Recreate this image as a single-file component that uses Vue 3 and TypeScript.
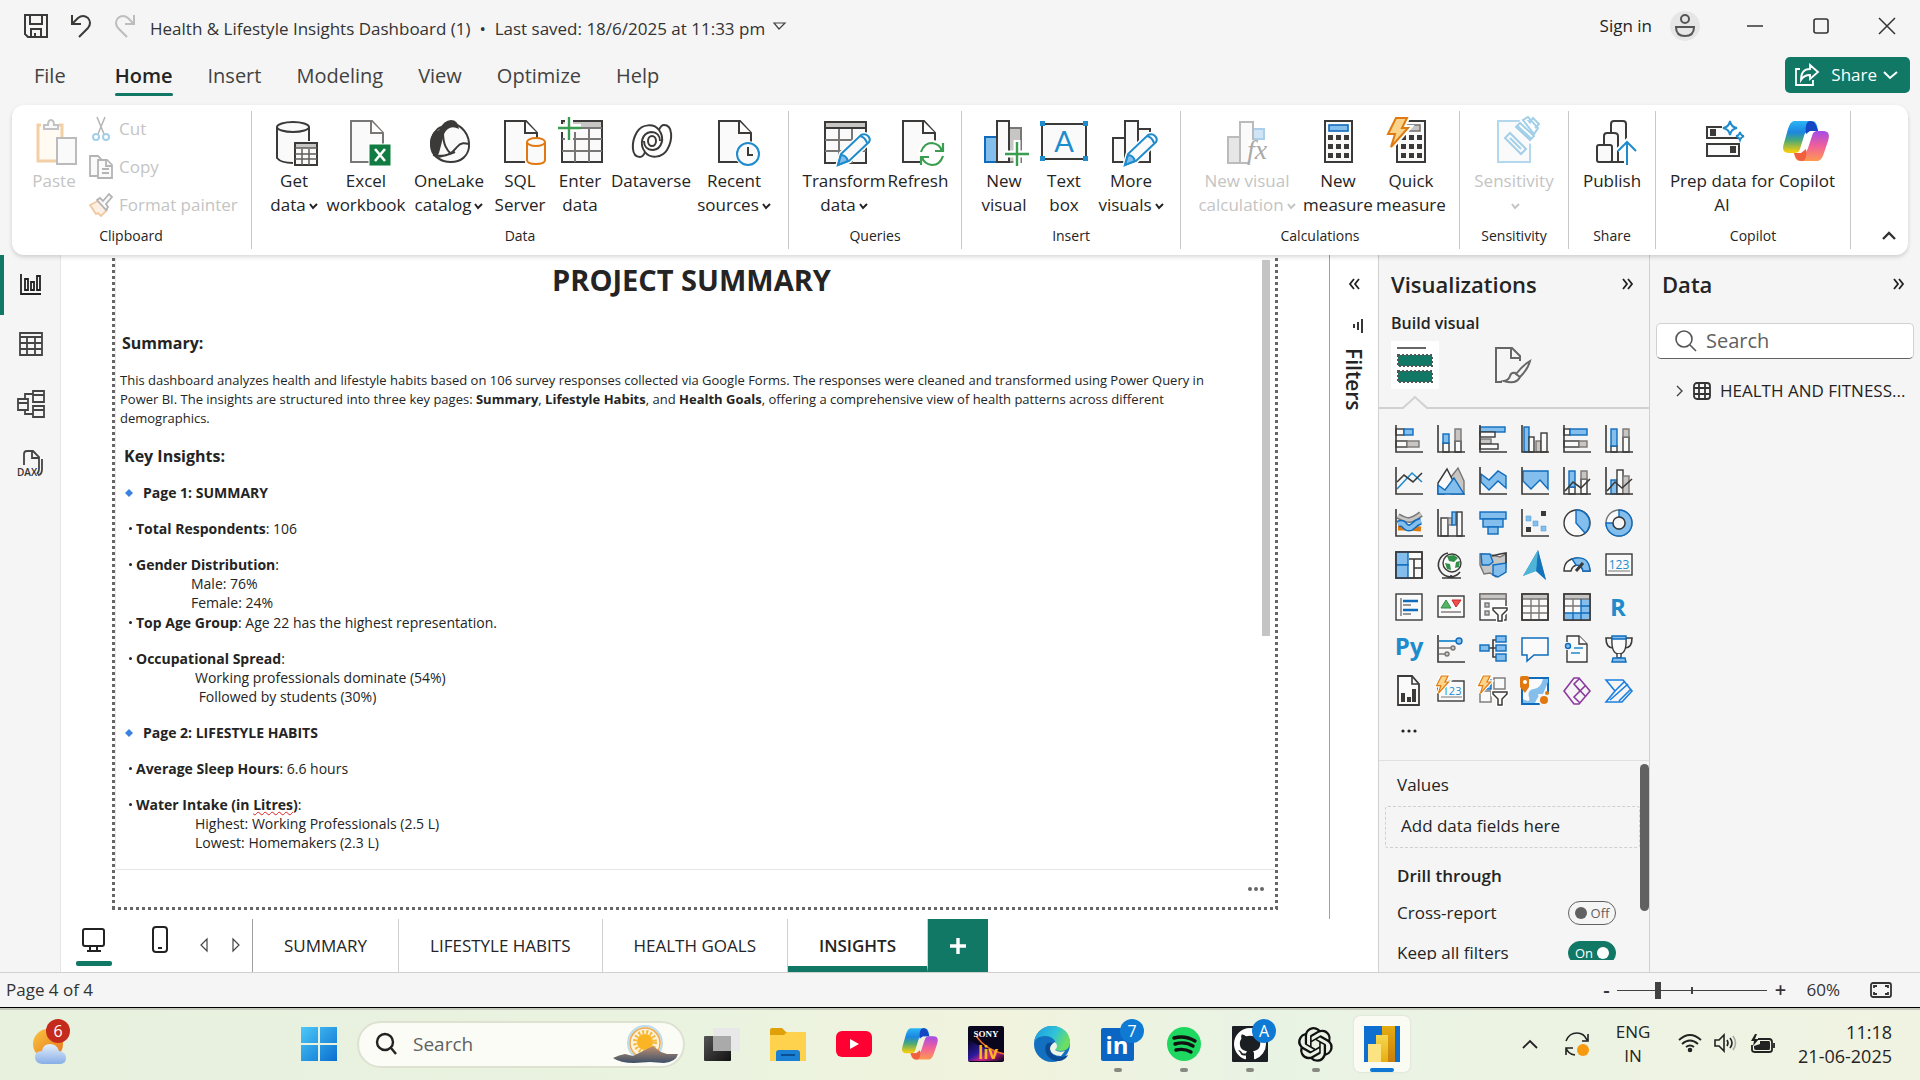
<script setup lang="ts">
import { ref } from 'vue'

interface Tool {
  icon: string
  lines: string[]
  size: string
  menu?: boolean
  off?: boolean
}
interface Group {
  name: string
  tools: Tool[]
}

const ink = 'stroke="#3b3a39" stroke-width="2"'
const page = (c: string) =>
  `<path d="M9 3h21l11 12v29H9z" fill="#fafafa" stroke="${c}" stroke-width="2"/><path d="M29 3v12h12" fill="#fff" stroke="${c}" stroke-width="2"/>`
const pencil =
  '<path d="M18 47l3-11L41 17q4-2 7 1t1 6L29 43z" fill="#fff" stroke="#fff" stroke-width="5"/><path d="M18 47l3-11L41 17q4-2 7 1t1 6L29 43z" fill="#fafafa" stroke="#1e8bcd" stroke-width="2"/><path d="M18 47l3-10q5 0 7 6z" fill="#83beec" stroke="#1e8bcd" stroke-width="2"/><path d="M40 18q5 1 7 7" fill="none" stroke="#1e8bcd" stroke-width="2"/>'
const keys = (x: number) =>
  [17, 26, 35]
    .map((y) => [0, 8, 16].map((d) => `<rect x="${x + d}" y="${y}" width="5" height="5" fill="#3b3a39"/>`).join(''))
    .join('')
const bolt = (s: number) =>
  `<path transform="scale(${s})" d="M9 0h11l-5 10h6L4 29l4-13H1z" fill="#fbd38a" stroke="#fff" stroke-width="6"/><path transform="scale(${s})" d="M9 0h11l-5 10h6L4 29l4-13H1z" fill="#fbd38a" stroke="#e07a10" stroke-width="2"/>`
const copilot =
  '<defs><linearGradient id="cpA" x1="0" y1="0" x2="0" y2="1"><stop offset="0" stop-color="#2bb5f5"/><stop offset=".35" stop-color="#1c86e0"/><stop offset=".6" stop-color="#48a878"/><stop offset=".95" stop-color="#f0cc10"/></linearGradient><linearGradient id="cpB" x1="0" y1="0" x2="0" y2="1"><stop offset="0" stop-color="#a44be8"/><stop offset=".5" stop-color="#f0609a"/><stop offset="1" stop-color="#ff9a50"/></linearGradient></defs><path d="M12 3h16c5 0 6 3 7 10h-8c-4 0-5 2-6 5l-4 13c-1 3-3 4-6 4H6c-6 0-7-4-5-10l4-14c2-6 4-8 7-8z" fill="url(#cpA)"/><path d="M27 3c5 0 6 3 8 10h-8l-4 3c-1-6 0-13 4-13z" fill="#1546c4"/><path d="M34 43H18c-5 0-6-3-7-8h8c4 0 5-2 6-5l4-12c1-4 3-5 6-5h5c6 0 7 4 5 10l-4 12c-2 6-4 8-7 8z" fill="url(#cpB)"/><path d="M19 43c-5 0-6-3-8-8h7l5-4c1 6 0 12-4 12z" fill="#f0603c"/>'

const swirl = 'M18 34q-2 5-5 5C4 39 4 24 10 14 15 6 27 5 32 12c6 8 3 19-6 20-6 0-9-4-9-9'

const art: Record<string, string> = {
  getData: `<path d="M8 9h31v15H24v20H8z" fill="#fafafa"/><path d="M7 9v31q4 5 16 5M39 9v14" fill="none" ${ink}/><ellipse cx="23" cy="9" rx="16" ry="5" fill="#fafafa" ${ink}/><rect x="25" y="25" width="22" height="22" fill="#fafafa" ${ink}/><path d="M26 26h20v4H26z" fill="#c8c6c4"/><path d="M25 30h22M25 36h22M25 41h22M32 31v16M39 31v16" stroke="#605e5c" stroke-width="1.5"/>`,
  excel: `${page('#797775')}<rect x="27" y="26" width="22" height="22" fill="#107c41" stroke="#fff"/><path d="M33 31l10 12M43 31L33 43" stroke="#fff" stroke-width="2.6"/>`,
  onelake: `<path d="M25 5c12 1 20 12 19 24-1 9-8 15-18 15S6 38 6 27C6 17 11 11 16 9" fill="#fafafa" ${ink}/><path d="M14 12Q19 2 26 2t8 9Q24 6 19 16l-5 19q-2 3-3 5Q5 33 5 24q1-10 9-12z" fill="#3b3a39"/><path d="M18 14c0 13 4 18 8 22M12 39c8-1 14-2 20-10 4-5 8-4 12-3M8 37c9 2 15 0 22-3" fill="none" ${ink}/>`,
  sql: `${page('#3b3a39')}<path d="M31 23v19q0 4 9 4t9-4V23z" fill="#fafafa" stroke="#fff" stroke-width="5"/><path d="M31 24v18q0 4 9 4t9-4V24" fill="#fafafa" stroke="#e07a10" stroke-width="2"/><ellipse cx="40" cy="24" rx="9" ry="4" fill="#fafafa" stroke="#e07a10" stroke-width="2"/>`,
  enter: `<rect x="6" y="3" width="40" height="41" fill="#fafafa" ${ink}/><path d="M7 4h38v5H7z" fill="#c8c6c4"/><path d="M6 10h40M6 21h40M6 33h40M19 10v34M33 10v34" stroke="#797775" stroke-width="2"/><path d="M13-1v23M2 10h23" stroke="#fff" stroke-width="8"/><path d="M13-1v23M2 10h23" stroke="#3a9d50" stroke-width="2.4"/>`,
  dataverse: `<path d="${swirl}" fill="none" ${ink}/><path transform="rotate(180 25 23)" d="${swirl}" fill="none" ${ink}/><ellipse cx="25" cy="23" rx="4" ry="5" fill="none" ${ink}/>`,
  recent: `${page('#3b3a39')}<circle cx="38" cy="36" r="13" fill="#fff"/><circle cx="38" cy="36" r="11" fill="#fafafa" stroke="#1e8bcd" stroke-width="2"/><path d="M38 29v8h5" fill="none" ${ink}/>`,
  transform: `<rect x="5" y="4" width="41" height="41" fill="#fafafa" ${ink}/><path d="M6 5h39v5H6z" fill="#c8c6c4"/><path d="M5 10h41" ${ink}/><path d="M5 22h41M5 33h41M19 11v34M32 11v34" stroke="#797775" stroke-width="2"/>${pencil}`,
  refresh: `${page('#3b3a39')}<circle cx="38" cy="36" r="14" fill="#fff"/><path d="M27 34q3-9 11-9 8 1 10 8M49 25v8h-8M49 38q-3 9-11 9-8-1-10-8M27 47v-8h8" fill="none" stroke="#3a9d50" stroke-width="2.2"/>`,
  visual: `<rect x="5" y="19" width="12" height="25" fill="#83beec" stroke="#0f6cbd" stroke-width="2"/><rect x="29" y="10" width="12" height="34" fill="#c8c6c4" stroke="#797775" stroke-width="2"/><rect x="17" y="3" width="12" height="41" fill="#fafafa" ${ink}/><path d="M37 22v26M24 36h25" stroke="#fff" stroke-width="7"/><path d="M37 24v24M25 36h24" stroke="#3a9d50" stroke-width="2.4"/>`,
  textbox: `<rect x="2" y="6" width="44" height="35" fill="#fafafa" ${ink}/><path d="M0 3h5v5H0zM43 3h5v5h-5zM0 38h5v5H0zM43 38h5v5h-5z" fill="#1e8bcd"/><text x="24" y="34" text-anchor="middle" font-family="Lato, sans-serif" font-size="29" fill="#1e8bcd">A</text>`,
  more: `<rect x="6" y="20" width="12" height="24" fill="#fafafa" ${ink}/><rect x="31" y="11" width="12" height="33" fill="#fafafa" ${ink}/><rect x="18" y="3" width="13" height="41" fill="#fafafa" ${ink}/>${pencil}`,
  calc: `<rect x="5" y="19" width="12" height="26" fill="#e6e6e6" stroke="#bbb" stroke-width="2"/><rect x="30" y="11" width="11" height="10" fill="#cfe4f7" stroke="#abcfe8" stroke-width="2"/><rect x="17" y="4" width="13" height="41" fill="#fafafa" stroke="#bbb" stroke-width="2"/><path d="M25 22h24v26H25z" fill="#fff"/><text x="24" y="41" font-family="Liberation Serif, serif" font-style="italic" font-size="28" fill="#aaa">fx</text>`,
  measure: `<rect x="11" y="3" width="27" height="41" fill="#fafafa" ${ink}/><rect x="15" y="7" width="19" height="6" fill="#83beec" stroke="#0f6cbd" stroke-width="1.6"/>${keys(14)}`,
  quick: `<rect x="10" y="3" width="28" height="41" fill="#fafafa" ${ink}/><rect x="16" y="7" width="17" height="6" fill="#c8c6c4" stroke="#797775" stroke-width="1.6"/>${keys(14)}${bolt(1)}`,
  sensitivity: `<rect x="8" y="3" width="32" height="41" fill="#fafafa" stroke="#b3d7ec" stroke-width="2"/><path d="M33-1l20 18-13 9-16-16z" fill="#fff"/><path d="M15 20l5-5 16 16-5 5zM20 20l11 11M26 9l4-4 14 13-4 4zM33 2l5-3 10 11-4 6zM39 5l4-5 6 6-4 4" fill="none" stroke="#a3cfe8" stroke-width="2"/><path d="M26 9l14 13 2-2L28 7z" fill="#a3cfe8"/>`,
  publish: `<path d="M23 15V6q0-3 3-3h9q3 0 3 3v38H26" fill="#fafafa" ${ink}/><path d="M16 27V18q0-3 3-3h7q4 0 4 3v26H16" fill="#fafafa" ${ink}/><rect x="9" y="27" width="15" height="17" rx="2" fill="#fafafa" ${ink}/><path d="M39 23v25M30 33l9-9 9 9" fill="none" stroke="#fff" stroke-width="6"/><path d="M39 24v23M30 33l9-9 9 9" fill="none" stroke="#1e8bcd" stroke-width="2"/>`,
  prep: `<path d="M24 9H9v11h32v-3" fill="#fafafa" ${ink}/><rect x="9" y="26" width="32" height="12" fill="#fafafa" ${ink}/><path d="M12 11h6v7h-6zM32 28h6v7h-6z" fill="#3b3a39"/><path d="M32 3q1 6 7 7-6 1-7 7-1-6-7-7 6-1 7-7zM42 14q1 4 4 4-3 1-4 4-1-3-4-4 3 0 4-4z" fill="#fff" stroke="#1e8bcd" stroke-width="2"/>`,
  copilot,
}

const groups: Group[] = [
  {
    name: 'Data',
    tools: [
      { icon: 'getData', lines: ['Get', 'data'], size: 's60', menu: true },
      { icon: 'excel', lines: ['Excel', 'workbook'], size: 's84' },
      { icon: 'onelake', lines: ['OneLake', 'catalog'], size: 's82', menu: true },
      { icon: 'sql', lines: ['SQL', 'Server'], size: 's60' },
      { icon: 'enter', lines: ['Enter', 'data'], size: 's60' },
      { icon: 'dataverse', lines: ['Dataverse'], size: 's82' },
      { icon: 'recent', lines: ['Recent', 'sources'], size: 's84', menu: true },
    ],
  },
  {
    name: 'Queries',
    tools: [
      { icon: 'transform', lines: ['Transform', 'data'], size: 's86', menu: true },
      { icon: 'refresh', lines: ['Refresh'], size: 's62' },
    ],
  },
  {
    name: 'Insert',
    tools: [
      { icon: 'visual', lines: ['New', 'visual'], size: 's60' },
      { icon: 'textbox', lines: ['Text', 'box'], size: 's60' },
      { icon: 'more', lines: ['More', 'visuals'], size: 's74', menu: true },
    ],
  },
  {
    name: 'Calculations',
    tools: [
      { icon: 'calc', lines: ['New visual', 'calculation'], size: 's108', menu: true, off: true },
      { icon: 'measure', lines: ['New', 'measure'], size: 's74' },
      { icon: 'quick', lines: ['Quick', 'measure'], size: 's72' },
    ],
  },
  { name: 'Sensitivity', tools: [{ icon: 'sensitivity', lines: ['Sensitivity', ''], size: 's84', menu: true, off: true }] },
  { name: 'Share', tools: [{ icon: 'publish', lines: ['Publish'], size: 's62' }] },
  {
    name: 'Copilot',
    tools: [
      { icon: 'prep', lines: ['Prep data for', 'AI'], size: 's108' },
      { icon: 'copilot', lines: ['Copilot'], size: 's62' },
    ],
  },
]

const D = 'fill="none" stroke="#3b3a39" stroke-width="1.6"'
const W = 'fill="#fafafa" stroke="#3b3a39" stroke-width="1.4"'
const B = 'fill="#83beec" stroke="#0f6cbd" stroke-width="1.4"'
const G = 'fill="#c8c6c4" stroke="#797775" stroke-width="1.4"'
const axes = `<path d="M1 0v27h27" ${D}/>`
const funnel = '<path d="M14 15h14v3l-5 4v6h-4v-6l-5-4z" fill="#fff" stroke="#fff" stroke-width="4"/><path d="M15 15h13v2l-5 5v6h-4v-6l-5-5v-2z" fill="#fafafa" stroke="#3b3a39" stroke-width="1.5"/>'
const sans = 'font-family="Open Sans, sans-serif"'

const visuals: { name: string; art: string }[] = [
  { name: 'Stacked bar chart', art: `<rect x="1" y="4" width="8" height="6" ${W}/><rect x="9" y="4" width="9" height="6" ${B}/><rect x="1" y="16" width="11" height="6" ${W}/><rect x="12" y="16" width="12" height="6" ${G}/>${axes}` },
  { name: 'Stacked column chart', art: `<rect x="6" y="18" width="6" height="9" ${W}/><rect x="6" y="9" width="6" height="9" ${B}/><rect x="18" y="16" width="6" height="11" ${W}/><rect x="18" y="4" width="6" height="12" ${G}/>${axes}` },
  { name: 'Clustered bar chart', art: `<rect x="1" y="2" width="25" height="5" ${B}/><rect x="1" y="7" width="15" height="5" ${W}/><rect x="1" y="14" width="11" height="5" ${G}/><rect x="1" y="19" width="18" height="5" ${W}/>${axes}` },
  { name: 'Clustered column chart', art: `<rect x="3" y="2" width="5" height="25" ${B}/><rect x="8" y="12" width="5" height="15" ${W}/><rect x="15" y="16" width="5" height="11" ${G}/><rect x="20" y="8" width="6" height="19" ${W}/>${axes}` },
  { name: '100% stacked bar chart', art: `<rect x="1" y="4" width="6" height="6" ${W}/><rect x="7" y="4" width="17" height="6" ${B}/><rect x="1" y="16" width="15" height="6" ${W}/><rect x="16" y="16" width="8" height="6" ${G}/>${axes}` },
  { name: '100% stacked column chart', art: `<rect x="6" y="21" width="6" height="6" ${W}/><rect x="6" y="4" width="6" height="17" ${B}/><rect x="18" y="12" width="6" height="15" ${W}/><rect x="18" y="4" width="6" height="8" ${G}/>${axes}` },
  { name: 'Line chart', art: `<path d="M2 22L17 6l10 9" fill="none" stroke="#1e8bcd" stroke-width="1.6"/><path d="M2 15l7-7 9 7 9-9" ${D}/>${axes}` },
  { name: 'Area chart', art: `<path d="M14 10l7-9 6 13v13H14z" ${G}/><path d="M1 16L10 2l9 18-12 7H1z" ${W}/><path d="M1 27V18l7 5 9-12 10 16z" ${B}/>` },
  { name: 'Stacked area chart', art: `<path d="M2 7l8 6 9-9 8 5v12l-8-7-9 9-8-8z" ${B}/>${axes}` },
  { name: 'Ribbon area chart', art: `<path d="M2 4h25v18l-8-9-9 9-8-8z" ${B}/>${axes}` },
  { name: 'Line and stacked column chart', art: `<rect x="6" y="20" width="6" height="7" ${W}/><rect x="6" y="4" width="6" height="16" ${B}/><rect x="18" y="12" width="6" height="15" ${W}/><rect x="18" y="4" width="6" height="8" ${G}/><path d="M2 24l8-9 8 6 9-9" ${D}/>${axes}` },
  { name: 'Line and clustered column chart', art: `<rect x="6" y="13" width="6" height="14" ${B}/><rect x="12" y="3" width="6" height="24" ${W}/><rect x="18" y="9" width="6" height="18" ${G}/><path d="M2 24l8-9 7 6 10-9" ${D}/>${axes}` },
  { name: 'Ribbon chart', art: `<path d="M3 19h11l12 1" stroke="#e07a10" stroke-width="5" fill="none"/><path d="M3 7q7 4 11 4t12-6" stroke="#797775" stroke-width="6" fill="none"/><path d="M3 7q7 4 11 4t12-6" stroke="#c8c6c4" stroke-width="3" fill="none"/><path d="M3 15q5-2 7 2 4 4 8 0t8-5" stroke="#0f6cbd" stroke-width="7" fill="none"/><path d="M3 15q5-2 7 2 4 4 8 0t8-5" stroke="#83beec" stroke-width="4" fill="none"/>${axes}` },
  { name: 'Waterfall chart', art: `<rect x="4" y="9" width="7" height="18" ${W}/><rect x="11" y="9" width="4" height="7" ${G}/><rect x="15" y="3" width="4" height="13" ${B}/><rect x="20" y="3" width="5" height="24" ${W}/>${axes}` },
  { name: 'Funnel', art: `<rect x="1" y="3" width="26" height="7" ${B}/><rect x="4" y="10" width="20" height="8" ${B}/><rect x="9" y="18" width="10" height="7" ${B}/>` },
  { name: 'Scatter chart', art: `<path d="M5 7h5v5H5zM12 12h5v5h-5zM20 17h5v5h-5z" fill="#83beec" stroke="#5aa4dc" stroke-width=".6"/><path d="M20 2h5v5h-5zM5 18h5v5H5z" fill="#3b3a39"/>${axes}` },
  { name: 'Pie chart', art: `<circle cx="14" cy="14" r="13" ${W}/><path d="M13 1v13l9 10A13 13 0 0 0 13 1z" ${B}/>` },
  { name: 'Donut chart', art: `<circle cx="14" cy="14" r="13" fill="#fafafa" stroke="#797775" stroke-width="1.4"/><path d="M14 1a13 13 0 1 1-13 13h7a6 6 0 1 0 6-6z" ${B}/><circle cx="14" cy="14" r="6" fill="#f5f5f5" stroke="#3b3a39" stroke-width="1.4"/>` },
  { name: 'Treemap', art: `<rect x="1" y="1" width="26" height="26" ${W}/><path d="M14 8h13M19 8v19M19 17h8" ${D}/><rect x="1" y="1" width="12" height="13" ${B}/><rect x="1" y="14" width="12" height="13" ${B}/><rect x="1" y="1" width="26" height="26" ${D}/>` },
  { name: 'Map', art: `<path d="M11 2a12 12 0 1 0 12 19M14 24v3M5 27h19" ${D}/><circle cx="15" cy="12" r="9" ${W}/><path d="M10 5l7-1 4 3-4 4-5-1zM8 12l5 1 1 6-4-1zM19 11l4-1-1 6-4 1z" fill="#2f9148"/>` },
  { name: 'Filled map', art: `<path d="M1 3l12 1 8 2 6-3v14l-4 6-6 3-6-4-6 1-4-9z" ${G}/><path d="M2 3h9l3 8-4 3H3z" ${B}/><path d="M14 14l13-2v9l-8 5-5-2z" ${B}/><path d="M13 5l8-2 6-1v10" ${D}/>` },
  { name: 'Azure map', art: `<path d="M17-1l8 30-10-9L2 25z" fill="#2e9bc8"/><path d="M17-1l8 30-10-9z" fill="#1673bb"/><path d="M17-1l-2 21L2 25z" fill="#50b4d8"/>` },
  { name: 'Gauge', art: `<path d="M1 20q0-12 13-13 12 1 13 13h-7q-1-5-6-6-5 1-6 6z" ${W}/><path d="M9 8q17-5 18 12h-7q-1-6-7-6z" ${B}/><path d="M20 12l-7 8" stroke="#3b3a39" stroke-width="3"/>` },
  { name: 'Card', art: `<rect x="1" y="3" width="26" height="21" ${W}/><text x="14" y="18" text-anchor="middle" ${sans} font-size="12" fill="#1e8bcd">123</text><path d="M3 20h22" stroke="#797775"/>` },
  { name: 'Multi-row card', art: `<rect x="1" y="1" width="26" height="26" ${W}/><path d="M6 5v18M8 12h8M8 21h8" stroke="#797775" stroke-width="1.4"/><path d="M8 8h15M8 17h15" stroke="#0f6cbd" stroke-width="2.4"/>` },
  { name: 'KPI', art: `<rect x="1" y="3" width="26" height="21" ${W}/><path d="M4 15l5-8 5 8z" fill="#58b368" stroke="#2f9148"/><path d="M15 7h9l-5 7z" fill="#f05050" stroke="#c62828"/><path d="M4 19h20" stroke="#797775" stroke-width="1.4"/>` },
  { name: 'Slicer', art: `<rect x="1" y="1" width="26" height="26" ${W}/><path d="M1 1h26v5H1z" ${G}/><rect x="6" y="10" width="4" height="4" ${G}/><rect x="6" y="18" width="4" height="4" ${G}/>${funnel}` },
  { name: 'Table', art: `<rect x="1" y="1" width="26" height="26" ${W}/><path d="M1 1h26v5H1z" ${G}/><path d="M1 13h26M1 20h26M10 6v21M18 6v21" stroke="#797775" stroke-width="1.4"/><rect x="1" y="1" width="26" height="26" ${D}/>` },
  { name: 'Matrix', art: `<rect x="1" y="1" width="26" height="26" ${W}/><path d="M18 6h9v21H1v-7h17z" fill="#83beec"/><path d="M1 1h26v5H1z" ${G}/><path d="M1 13h17M10 6v14" stroke="#797775" stroke-width="1.4"/><path d="M1 20h26M18 6v21M10 20v7M18 13h9" stroke="#0f6cbd" stroke-width="1.4"/><rect x="1" y="1" width="26" height="26" ${D}/>` },
  { name: 'R script visual', art: `<text x="13" y="23" text-anchor="middle" ${sans} font-weight="700" font-size="24" fill="#1e8bcd">R</text>` },
  { name: 'Python visual', art: `<text x="14" y="20" text-anchor="middle" ${sans} font-weight="700" font-size="24" fill="#1e8bcd">Py</text>` },
  { name: 'Key influencers', art: `<path d="M2 6h17" stroke="#1e8bcd" stroke-width="1.8"/><circle cx="22" cy="6" r="3" ${B}/><path d="M2 13h12M2 19h6" stroke="#797775" stroke-width="1.4"/><circle cx="16" cy="13" r="2" ${G}/><circle cx="10" cy="19" r="2" ${G}/>${axes}` },
  { name: 'Decomposition tree', art: `<path d="M10 13h7M17 5h-3v17h3" ${D}/><rect x="1" y="10" width="9" height="6" ${B}/><rect x="17" y="1" width="10" height="6" ${B}/><rect x="17" y="10" width="10" height="6" ${B}/><rect x="17" y="19" width="10" height="7" ${B}/>` },
  { name: 'Q&A', art: `<path d="M1 3h26v17H13l-7 6v-6H1z" fill="#fafafa" stroke="#0f6cbd" stroke-width="1.5"/>` },
  { name: 'Narrative', art: `<path d="M4 7V1h12l8 8v18H4V15" ${W}/><path d="M16 1v8h8" ${W}/><circle cx="5" cy="11" r="2.5" ${B}/><path d="M11 13h9M8 18h9" stroke="#1e8bcd" stroke-width="1.5"/>` },
  { name: 'Metrics', art: `<path d="M7 3H1q0 10 7 10M21 3h6q0 10-7 10" ${D}/><path d="M7 3h14q1 16-7 16T7 3z" ${W}/><path d="M12 19v4h4v-4" ${W}/><path d="M7 1h14v3H7zM8 23h12l1 4H7z" ${B}/>` },
  { name: 'Paginated report', art: `<path d="M3-1h14l7 8v21H3z" fill="#fafafa" stroke="#3b3a39" stroke-width="1.8"/><path d="M17-1v8h7" ${D}/><path d="M6 16h4v9H6zM12 20h4v5h-4zM17 12h4v13h-4z" fill="#3b3a39"/>` },
  { name: 'Card (new)', art: `<rect x="1" y="4" width="26" height="20" ${W}/><text x="15" y="18" text-anchor="middle" ${sans} font-size="11" fill="#1e8bcd">123</text><path d="M4 20h21" stroke="#797775"/><g transform="translate(-1 -1)">${bolt(0.6)}</g>` },
  { name: 'Slicer (new)', art: `<rect x="1" y="14" width="11" height="11" fill="#fafafa" stroke="#797775" stroke-width="1.4"/><rect x="15" y="1" width="11" height="11" fill="#fafafa" stroke="#797775" stroke-width="1.4"/><rect x="2" y="3" width="10" height="9" ${B}/>${funnel}<g transform="translate(-1 -1)">${bolt(0.6)}</g>` },
  { name: 'ArcGIS map', art: `<path d="M1 1h26v26H1z" fill="#fafafa" stroke="#0f6cbd" stroke-width="2"/><path d="M2 26h12q3-8 8-9l5-12v-3h-5q-2 9-9 10t-5 8-6 2z" fill="#83beec"/><path d="M17 17h12v12H19z" fill="#f5f5f5"/><path d="M-1 1q0-2 2-2h5q2 0 2 3v8l-4 6-5-6z" fill="#e07a10"/><circle cx="4" cy="5" r="2" fill="#fff"/><circle cx="23" cy="23" r="4" fill="#e07a10"/><circle cx="26" cy="16" r="2" fill="#e07a10"/>` },
  { name: 'Power Apps', art: `<path d="M11 1h5l11 13-11 13h-5L1 14zM17 1L11 7l12 13M23 8L11 20l6 6M11 7l6 7" fill="none" stroke="#8c3a9e" stroke-width="1.6"/>` },
  { name: 'Power Automate', art: `<path d="M1 3h17l9 11-10 11H1l9-11zM10 14L20 4M5 23L23 7M14 24L26 12" fill="none" stroke="#1a7fe0" stroke-width="1.6"/>` },
]

const menus = ['File', 'Home', 'Insert', 'Modeling', 'View', 'Optimize', 'Help']
const pages = ['SUMMARY', 'LIFESTYLE HABITS', 'HEALTH GOALS', 'INSIGHTS']
const activePage = ref('INSIGHTS')
const crossReport = ref(false)
const keepFilters = ref(true)
const zoom = ref(27)
const fieldQuery = ref('')
const webQuery = ref('')

const openai =
  'M22.2819 9.8211a5.9847 5.9847 0 0 0-.5157-4.9108 6.0462 6.0462 0 0 0-6.5098-2.9A6.0651 6.0651 0 0 0 4.9807 4.1818a5.9847 5.9847 0 0 0-3.9977 2.9 6.0462 6.0462 0 0 0 .7427 7.0966 5.98 5.98 0 0 0 .511 4.9107 6.051 6.051 0 0 0 6.5146 2.9001A5.9847 5.9847 0 0 0 13.2599 24a6.0557 6.0557 0 0 0 5.7718-4.2058 5.9894 5.9894 0 0 0 3.9977-2.9001 6.0557 6.0557 0 0 0-.7475-7.0729zm-9.022 12.6081a4.4755 4.4755 0 0 1-2.8764-1.0408l.1419-.0804 4.7783-2.7582a.7948.7948 0 0 0 .3927-.6813v-6.7369l2.02 1.1686a.071.071 0 0 1 .038.052v5.5826a4.504 4.504 0 0 1-4.4945 4.4944zm-9.6607-4.1254a4.4708 4.4708 0 0 1-.5346-3.0137l.142.0852 4.783 2.7582a.7712.7712 0 0 0 .7806 0l5.8428-3.3685v2.3324a.0804.0804 0 0 1-.0332.0615L9.74 19.9502a4.4992 4.4992 0 0 1-6.1408-1.6464zM2.3408 7.8956a4.485 4.485 0 0 1 2.3655-1.9728V11.6a.7664.7664 0 0 0 .3879.6765l5.8144 3.3543-2.0201 1.1685a.0757.0757 0 0 1-.071 0l-4.8303-2.7865A4.504 4.504 0 0 1 2.3408 7.872zm16.5963 3.8558L13.1038 8.364 15.1192 7.2a.0757.0757 0 0 1 .071 0l4.8303 2.7913a4.4944 4.4944 0 0 1-.6765 8.1042v-5.6772a.79.79 0 0 0-.407-.667zm2.0107-3.0231l-.142-.0852-4.7735-2.7818a.7759.7759 0 0 0-.7854 0L9.409 9.2297V6.8974a.0662.0662 0 0 1 .0284-.0615l4.8303-2.7866a4.4992 4.4992 0 0 1 6.6802 4.66zM8.3065 12.863l-2.02-1.1638a.0804.0804 0 0 1-.038-.0567V6.0742a4.4992 4.4992 0 0 1 7.3757-3.4537l-.142.0805L8.704 5.459a.7948.7948 0 0 0-.3927.6813zm1.0976-2.3654l2.602-1.4998 2.6069 1.4998v2.9994l-2.5974 1.4997-2.6067-1.4997Z'
const octocat =
  'M8 0C3.58 0 0 3.58 0 8c0 3.54 2.29 6.53 5.47 7.59.4.07.55-.17.55-.38 0-.19-.01-.82-.01-1.49-2.01.37-2.53-.49-2.69-.94-.09-.23-.48-.94-.82-1.13-.28-.15-.68-.52-.01-.53.63-.01 1.08.58 1.23.82.72 1.21 1.87.87 2.33.66.07-.52.28-.87.51-1.07-1.78-.2-3.64-.89-3.64-3.95 0-.87.31-1.59.82-2.15-.08-.2-.36-1.02.08-2.12 0 0 .67-.21 2.2.82.64-.18 1.32-.27 2-.27s1.36.09 2 .27c1.53-1.04 2.2-.82 2.2-.82.44 1.1.16 1.92.08 2.12.51.56.82 1.27.82 2.15 0 3.07-1.87 3.75-3.65 3.95.29.25.54.73.54 1.48 0 1.07-.01 1.93-.01 2.2 0 .21.15.46.55.38A8.01 8.01 0 0 0 16 8c0-4.42-3.58-8-8-8z'

const apps: { name: string; art: string; running?: boolean; current?: boolean; badge?: string }[] = [
  { name: 'Task view', art: '<defs><linearGradient id="tvA" x1="0" y1="0" x2="1" y2="1"><stop offset="0" stop-color="#555"/><stop offset="1" stop-color="#111"/></linearGradient></defs><rect x="0" y="9" width="27" height="25" rx="1" fill="url(#tvA)"/><rect x="9" y="1" width="27" height="23" rx="1" fill="#e8e8e8"/><rect x="9" y="9" width="18" height="15" fill="#aaa"/>' },
  { name: 'File Explorer', art: '<path d="M0 3q0-2 2-2h10l4 4h18q2 0 2 2v25q0 2-2 2H2q-2 0-2-2z" fill="#e0a008"/><path d="M0 8h14l3-3h17q2 0 2 2v25q0 2-2 2H2q-2 0-2-2z" fill="#ffd24d"/><path d="M6 26q0-3 3-3h18q3 0 3 3v8H6z" fill="#1a80d4"/><path d="M11 28h14" stroke="#0a4f94" stroke-width="2"/>' },
  { name: 'YouTube', art: '<rect x="0" y="4" width="36" height="26" rx="6" fill="#ff0033"/><path d="M14 12v10l9-5z" fill="#fff"/>' },
  { name: 'Copilot', art: `<g transform="translate(0 -1) scale(.78)">${copilot}</g>` },
  { name: 'Sony LIV', art: '<defs><linearGradient id="svA" x1="0" y1="0" x2="1" y2="1"><stop offset="0" stop-color="#06031c"/><stop offset=".45" stop-color="#2c1a9c"/><stop offset=".65" stop-color="#d0248c"/><stop offset="1" stop-color="#0c0420"/></linearGradient></defs><rect width="36" height="36" y="-1" rx="2" fill="#08051c"/><path d="M0 12q14 10 36 14v8H0z" fill="url(#svA)"/><path d="M8 9q10 14 28 18" stroke="#f0702c" stroke-width="1.5" fill="none"/><text x="18" y="10" text-anchor="middle" font-family="Liberation Serif, serif" font-weight="700" font-size="9" fill="#fff">SONY</text><text x="20" y="32" text-anchor="middle" font-family="Open Sans, sans-serif" font-weight="700" font-size="17" fill="#fbb81c">liv</text>' },
  { name: 'Microsoft Edge', art: '<defs><linearGradient id="edA" x1="0" y1="0" x2="1" y2=".4"><stop offset="0" stop-color="#1c9ae0"/><stop offset=".6" stop-color="#2fc3d8"/><stop offset="1" stop-color="#6ede60"/></linearGradient></defs><circle cx="18" cy="17" r="18" fill="#1370c0"/><path d="M0 15C2 5 9-1 18-1c11 0 18 7 18 16 0 6-4 9-9 9-4 0-7-1-6-3 3-6-2-12-10-12Q3 9 0 15z" fill="url(#edA)"/><path d="M12 18c-3 8 4 16 12 16 4 0 8-2 10-6-8 4-17 1-18-6 0-3 1-5 3-6-3-1-6 0-7 2z" fill="#0c4a94"/><path d="M21 15q4 4 0 8 4 3 10 1l-4 5q-10 0-11-7 0-4 5-7z" fill="#f0f4e6"/>' },
  { name: 'LinkedIn', running: true, badge: '7', art: '<rect x="1" y="1" width="33" height="33" rx="2" fill="#0a66c2"/><text x="17" y="27" text-anchor="middle" font-family="Open Sans, sans-serif" font-weight="700" font-size="24" fill="#fff">in</text>' },
  { name: 'Spotify', running: true, art: '<circle cx="18" cy="17" r="17" fill="#1ed760"/><path d="M8 11q11-3 21 3M9 17q10-3 18 2M10 23q8-2 15 2" fill="none" stroke="#111" stroke-width="3.4" stroke-linecap="round"/>' },
  { name: 'GitHub', running: true, badge: 'A', art: `<rect width="36" height="36" y="-1" rx="1" fill="#1b1f23"/><path transform="translate(2 1) scale(2)" d="${octocat}" fill="#fff"/>` },
  { name: 'ChatGPT', running: true, art: `<path transform="scale(1.45)" d="${openai}" fill="#111"/>` },
  { name: 'Power BI Desktop', current: true, art: '<defs><linearGradient id="pbA" x1="0" y1="0" x2="0" y2="1"><stop offset="0" stop-color="#e6ad10"/><stop offset="1" stop-color="#c87e0e"/></linearGradient><linearGradient id="pbB" x1="0" y1="0" x2="0" y2="1"><stop offset="0" stop-color="#f6d751"/><stop offset="1" stop-color="#e6ad10"/></linearGradient></defs><rect width="36" height="36" y="-1" fill="#0f6fd0"/><rect x="18" y="-1" width="13" height="36" fill="url(#pbA)"/><rect x="12" y="8" width="12" height="27" fill="url(#pbB)"/><rect x="4" y="17" width="13" height="18" fill="#fbe382"/>' },
]
</script>

<template>
  <div class="app">
    <header class="titlebar">
      <button class="bare" aria-label="Save">
        <svg width="24" height="24" viewBox="0 0 24 24" fill="none" stroke="#3b3a39" stroke-width="2"><path d="M1 1h22v22H4l-3-3zM6 1v9h12V1M7 23v-8h10v8M11 19v4" /></svg>
      </button>
      <button class="bare" aria-label="Undo">
        <svg width="22" height="24" viewBox="0 0 22 24" fill="none" stroke="#3b3a39" stroke-width="2"><path d="M2 1v9h9M2 10l6-6q5-4 10 0 4 5 0 10l-9 9" /></svg>
      </button>
      <button class="bare" aria-label="Redo" disabled>
        <svg width="22" height="24" viewBox="0 0 22 24" fill="none" stroke="#bdbdbd" stroke-width="2"><path d="M20 1v9h-9M20 10l-6-6q-5-4-10 0-4 5 0 10l9 9" /></svg>
      </button>
      <button class="bare filename">
        Health &amp; Lifestyle Insights Dashboard (1)&nbsp; • &nbsp;Last saved: 18/6/2025 at 11:33 pm
        <svg width="13" height="8" viewBox="0 0 13 8" fill="none" stroke="#444" stroke-width="1.2"><path d="M1 1h11L6 7z" /></svg>
      </button>
      <button class="bare signin">Sign in</button>
      <span class="avatar">
        <svg width="20" height="26" viewBox="0 0 20 26" fill="none" stroke="#555" stroke-width="2"><circle cx="10" cy="6" r="4" /><path d="M1 14h18q0 9-9 9t-9-9z" /></svg>
      </span>
      <button class="bare win" aria-label="Minimize"><svg width="16" height="16" viewBox="0 0 16 16" stroke="#333" stroke-width="1.5"><path d="M0 8h16" /></svg></button>
      <button class="bare win" aria-label="Maximize"><svg width="16" height="16" viewBox="0 0 16 16" fill="none" stroke="#333" stroke-width="1.6"><rect x="1" y="1" width="14" height="14" rx="2" /></svg></button>
      <button class="bare win" aria-label="Close"><svg width="16" height="16" viewBox="0 0 16 16" stroke="#333" stroke-width="1.5"><path d="M0 0l16 16M16 0L0 16" /></svg></button>
    </header>

    <nav class="menubar">
      <button v-for="m in menus" :key="m" class="bare menu" :class="{ active: m === 'Home' }">{{ m }}</button>
      <button class="share">
        <svg width="24" height="22" viewBox="0 0 24 22" fill="none" stroke="#fff" stroke-width="1.8"><path d="M5 5H1v16h17v-5M15 1l8 7-8 7v-4q-6 0-9 5 0-11 9-11z" /></svg>
        <span>Share</span>
        <svg width="15" height="9" viewBox="0 0 15 9" fill="none" stroke="#fff" stroke-width="2"><path d="M1 1l6 6 7-6" /></svg>
      </button>
    </nav>

    <section class="ribbon" aria-label="Ribbon">
      <div class="group clipboard">
        <div class="tools">
          <button class="tool s62 off" disabled>
            <svg class="glyph" width="48" height="48" viewBox="0 0 48 48" fill="none" stroke-width="2"><path d="M11 7H8v36h24V7h-3" fill="#fffaf2" stroke="#f3cfa5" stroke-width="3" /><path d="M14 11V7h4q0-5 3-5t3 5h4v4z" fill="#fafafa" stroke="#c2c2c2" /><rect x="27" y="20" width="19" height="26" fill="#fafafa" stroke="#bbb" /></svg>
            <span>Paste</span>
          </button>
          <div class="stack">
            <button class="bare mini" disabled><svg width="24" height="24" viewBox="0 0 24 24" fill="none" stroke="#b4b4b4" stroke-width="1.5"><path d="M8 0l7 17M16 0L9 17" /><circle cx="7" cy="20" r="3" stroke="#a3cfe8" stroke-width="2" /><circle cx="17" cy="20" r="3" stroke="#a3cfe8" stroke-width="2" /></svg>Cut</button>
            <button class="bare mini" disabled><svg width="24" height="24" viewBox="0 0 24 24" fill="#fafafa" stroke="#b4b4b4" stroke-width="1.8"><path d="M1 1h8l3 3v17H1z" /><path d="M9 5h9l5 5v13H9z" /><path d="M17 5v6h6M13 14h7M13 18h7" /></svg>Copy</button>
            <button class="bare mini" disabled><svg width="24" height="24" viewBox="0 0 24 24" fill="#fafafa" stroke="#b4b4b4" stroke-width="1.8"><path d="M1 12l8-4 9 9-6 6-3-3-2 1z" fill="#fdf0e2" stroke="#f0c8a0" /><path d="M8 7l3-2 3 3 6-7 3 3-6 7 2 3-2 3z" /></svg>Format painter</button>
          </div>
        </div>
        <div class="caption">Clipboard</div>
      </div>
      <div v-for="g in groups" :key="g.name" class="group">
        <div class="tools">
          <button v-for="t in g.tools" :key="t.icon" class="tool" :class="[t.size, { off: t.off }]" :disabled="t.off">
            <svg class="glyph" width="48" height="48" viewBox="0 0 48 48" fill="none" v-html="art[t.icon]"></svg>
            <span v-for="(line, i) in t.lines" :key="i" class="line">{{ line }}<svg v-if="t.menu && i === 1" class="caret" width="9" height="7" viewBox="0 0 9 7" fill="none" stroke="currentColor" stroke-width="2"><path d="M1 1l3 4 4-4" /></svg></span>
          </button>
        </div>
        <div class="caption">{{ g.name }}</div>
      </div>
      <button class="bare collapse" aria-label="Collapse ribbon"><svg width="14" height="9" viewBox="0 0 14 9" fill="none" stroke="#333" stroke-width="2.4"><path d="M1 8l6-6 6 6" /></svg></button>
    </section>

    <main class="work">
      <aside class="rail">
        <button class="bare view current" aria-label="Report view"><svg width="24" height="24" viewBox="0 0 24 24" fill="none" stroke="#222" stroke-width="1.8"><path d="M2 2v20h20M6 18V7h3v11zM12 18v-8h3v8zM18 18V4h3v14z" /></svg></button>
        <button class="bare view" aria-label="Table view"><svg width="24" height="24" viewBox="0 0 24 24" fill="none" stroke="#444" stroke-width="1.8"><path d="M1 1h22v22H1zM1 5h22M1 11h22M1 17h22M8 5v18M16 5v18" /></svg></button>
        <button class="bare view" aria-label="Model view"><svg width="28" height="28" viewBox="0 0 28 28" fill="none" stroke="#444" stroke-width="1.8"><path d="M1 9h10v11H1zM1 13h10M16 1h11v11H16zM16 5h11M16 16h11v11H16zM16 20h11M8 9V4h8M8 20v4h8" /></svg></button>
        <button class="bare view" aria-label="DAX query view"><svg width="28" height="28" viewBox="0 0 28 28" fill="none" stroke="#444" stroke-width="1.8"><path d="M7 15V4q0-3 3-3h6l6 6v12q0 3-2 5M15 1v7h7M25 9v10q0 6-4 6" /><text x="0" y="26" font-family="Open Sans, sans-serif" font-size="10" font-weight="600" fill="#333" stroke="none">DAX</text></svg></button>
      </aside>

      <div class="center">
        <div class="upper">
          <div class="canvas">
            <article class="textbox">
              <div class="doc">
                <h1>PROJECT SUMMARY</h1>
                <h2 class="first">Summary:</h2>
                <p class="para">This dashboard analyzes health and lifestyle habits based on 106 survey responses collected via Google Forms. The responses were cleaned and transformed using Power Query in<br />Power BI. The insights are structured into three key pages: <b>Summary</b>, <b>Lifestyle Habits</b>, and <b>Health Goals</b>, offering a comprehensive view of health patterns across different<br />demographics.</p>
                <h2>Key Insights:</h2>
                <h3><svg width="8" height="8" viewBox="0 0 8 8" fill="#3b82e0"><path d="M4 0l4 4-4 4-4-4z" /></svg>Page 1: SUMMARY</h3>
                <p class="item"><b>Total Respondents</b>: 106</p>
                <p class="item"><b>Gender Distribution</b>:</p>
                <p class="sub">Male: 76%<br />Female: 24%</p>
                <p class="item tight"><b>Top Age Group</b>: Age 22 has the highest representation.</p>
                <p class="item"><b>Occupational Spread</b>:</p>
                <p class="sub deep">Working professionals dominate (54%)<br />&nbsp;Followed by students (30%)</p>
                <h3><svg width="8" height="8" viewBox="0 0 8 8" fill="#3b82e0"><path d="M4 0l4 4-4 4-4-4z" /></svg>Page 2: LIFESTYLE HABITS</h3>
                <p class="item"><b>Average Sleep Hours</b>: 6.6 hours</p>
                <p class="item"><b>Water Intake (in <u>Litres</u>)</b>:</p>
                <p class="sub deep">Highest: Working Professionals (2.5 L)<br />Lowest: Homemakers (2.3 L)</p>
              </div>
              <i class="scroll"></i>
              <footer class="boxfoot"><svg width="16" height="4" viewBox="0 0 16 4" fill="#666"><circle cx="2" cy="2" r="2" /><circle cx="8" cy="2" r="2" /><circle cx="14" cy="2" r="2" /></svg></footer>
            </article>
          </div>
          <aside class="filters">
            <button class="bare" aria-label="Expand filters"><svg width="11" height="12" viewBox="0 0 11 12" fill="none" stroke="#222" stroke-width="1.8"><path d="M5 1L1 6l4 5M10 1L6 6l4 5" /></svg></button>
            <svg class="bars" width="14" height="14" viewBox="0 0 14 14" stroke="#222" stroke-width="1.8"><path d="M12 0v14M8 3v8M4 5v4" /></svg>
            <h2>Filters</h2>
          </aside>
        </div>
        <div class="pagebar">
          <button class="bare layout on" aria-label="Desktop layout"><svg width="24" height="26" viewBox="0 0 24 26" fill="none" stroke="#222" stroke-width="2"><rect x="1" y="2" width="21" height="17" rx="2" /><path d="M8 19v4M15 19v4M5 24h14" /></svg></button>
          <button class="bare layout" aria-label="Mobile layout"><svg width="18" height="28" viewBox="0 0 18 28" fill="none" stroke="#222" stroke-width="2"><rect x="2" y="1" width="14" height="25" rx="3" /><path d="M7 22h4" /></svg></button>
          <button class="bare step" aria-label="Previous page"><svg width="8" height="14" viewBox="0 0 8 14" fill="none" stroke="#444" stroke-width="1.2"><path d="M7 1v12L1 7z" /></svg></button>
          <button class="bare step" aria-label="Next page"><svg width="8" height="14" viewBox="0 0 8 14" fill="none" stroke="#444" stroke-width="1.2"><path d="M1 1v12l6-6z" /></svg></button>
          <div class="pages">
            <button v-for="p in pages" :key="p" class="page" :class="{ active: p === activePage }" @click="activePage = p">{{ p }}</button>
            <button class="add" aria-label="New page"><svg width="18" height="18" viewBox="0 0 18 18" stroke="#fff" stroke-width="3.4"><path d="M9 1v16M1 9h16" /></svg></button>
          </div>
        </div>
      </div>

      <aside class="viz">
        <div class="panehead"><h2>Visualizations</h2><button class="bare" aria-label="Collapse"><svg width="11" height="12" viewBox="0 0 11 12" fill="none" stroke="#222" stroke-width="1.8"><path d="M1 1l4 5-4 5M6 1l4 5-4 5" /></svg></button></div>
        <h3 class="build">Build visual</h3>
        <div class="modes">
          <button class="bare mode on" aria-label="Build visual"><svg width="36" height="36" viewBox="0 0 36 36"><path d="M0 1h29" stroke="#666" stroke-width="2" /><path d="M1 8h34v11H1zM1 24h34v11H1z" fill="#117865" stroke="#555" stroke-width="2" stroke-dasharray="2 2" /></svg></button>
          <button class="bare mode" aria-label="Format visual"><svg width="36" height="36" viewBox="0 0 36 36" fill="none" stroke="#666" stroke-width="2"><path d="M7 35H1V1h16l8 8v5M16 1v10h9" /><path d="M35 14q-7 4-14 13l4 3q8-8 10-16zM21 26q-5-1-6 3t-6 5q12 4 16-4" /></svg></button>
        </div>
        <svg class="notch" width="270" height="13" viewBox="0 0 270 13" fill="none" stroke="#d1d1d1" stroke-width="2"><path d="M0 12h24L36 1l12 11h222" /></svg>
        <div class="gallery">
          <button v-for="v in visuals" :key="v.name" class="bare pick" :aria-label="v.name"><svg width="28" height="28" viewBox="0 0 28 28" fill="none" v-html="v.art"></svg></button>
          <button class="bare pick" aria-label="Get more visuals"><svg width="28" height="28" viewBox="0 0 28 28" fill="#222"><circle cx="8" cy="12" r="1.6" /><circle cx="14" cy="12" r="1.6" /><circle cx="20" cy="12" r="1.6" /></svg></button>
        </div>
        <div class="wells">
          <div class="fields">
            <h4>Values</h4>
            <div class="drop">Add data fields here</div>
            <h3>Drill through</h3>
            <div class="row"><label for="cross">Cross-report</label><label class="toggle"><input id="cross" v-model="crossReport" type="checkbox" role="switch" /><span>{{ crossReport ? 'On' : 'Off' }}</span></label></div>
            <div class="row"><label for="keep">Keep all filters</label><label class="toggle checked"><input id="keep" v-model="keepFilters" type="checkbox" role="switch" /><span>{{ keepFilters ? 'On' : 'Off' }}</span></label></div>
          </div>
          <i class="bar"></i>
        </div>
      </aside>

      <aside class="data">
        <div class="panehead"><h2>Data</h2><button class="bare" aria-label="Collapse"><svg width="11" height="12" viewBox="0 0 11 12" fill="none" stroke="#222" stroke-width="1.8"><path d="M1 1l4 5-4 5M6 1l4 5-4 5" /></svg></button></div>
        <label class="find">
          <svg width="22" height="22" viewBox="0 0 22 22" fill="none" stroke="#555" stroke-width="1.6"><circle cx="9" cy="9" r="8" /><path d="M15 15l6 6" /></svg>
          <input v-model="fieldQuery" type="search" placeholder="Search" aria-label="Search fields" />
        </label>
        <button class="bare table">
          <svg width="8" height="12" viewBox="0 0 8 12" fill="none" stroke="#444" stroke-width="1.4"><path d="M1 1l5 5-5 5" /></svg>
          <svg width="18" height="18" viewBox="0 0 18 18" fill="none" stroke="#333" stroke-width="1.8"><rect x="1" y="1" width="16" height="16" rx="3" /><path d="M1 6h16M1 12h16M6 1v16M12 1v16" /></svg>
          <span>HEALTH AND FITNESS...</span>
        </button>
      </aside>
    </main>

    <footer class="status">
      <span>Page 4 of 4</span>
      <button class="bare sign minus" aria-label="Zoom out">-</button>
      <input v-model="zoom" class="zoom" type="range" min="0" max="100" aria-label="Zoom" />
      <button class="bare sign" aria-label="Zoom in">+</button>
      <span class="percent">60%</span>
      <button class="bare" aria-label="Fit to page"><svg width="22" height="16" viewBox="0 0 22 16" fill="none" stroke="#333" stroke-width="1.8"><rect x="1" y="1" width="20" height="14" rx="2" /><path d="M7 4H4v2M4 10v2h3M15 4h3v2M18 10v2h-3" /></svg></button>
    </footer>

    <footer class="taskbar">
      <button class="bare weather" aria-label="Weather">
        <svg width="36" height="42" viewBox="0 0 36 42"><defs><linearGradient id="wxA" x1="0" y1="0" x2="1" y2="1"><stop offset="0" stop-color="#f8c440" /><stop offset="1" stop-color="#e8741c" /></linearGradient><linearGradient id="wxB" x1="0" y1="0" x2="0" y2="1"><stop offset="0" stop-color="#e6effc" /><stop offset="1" stop-color="#86aee6" /></linearGradient></defs><circle cx="15" cy="17" r="15" fill="url(#wxA)" /><path d="M9 37q-7-1-7-7t7-6q1-7 8-7t9 7q7 1 7 7t-7 6z" fill="url(#wxB)" /></svg>
        <b>6</b>
      </button>
      <button class="bare start" aria-label="Start"><svg width="36" height="36" viewBox="0 0 36 36"><defs><linearGradient id="stA" x1="0" y1="0" x2="1" y2="1"><stop offset="0" stop-color="#4cc8f8" /><stop offset="1" stop-color="#0a6fd0" /></linearGradient></defs><path d="M0 1h17v16H0zM19 1h17v16H19zM0 19h17v16H0zM19 19h17v16H19z" fill="url(#stA)" /></svg></button>
      <label class="websearch">
        <svg width="22" height="22" viewBox="0 0 22 22" fill="none" stroke="#222" stroke-width="2.4"><circle cx="10" cy="9" r="8" /><path d="M16 15l5 6" /></svg>
        <input v-model="webQuery" type="search" placeholder="Search" aria-label="Search the web" />
        <svg width="66" height="40" viewBox="0 0 66 40"><defs><linearGradient id="hlA" x1="0" y1="0" x2="0" y2="1"><stop offset="0" stop-color="#c09070" /><stop offset="1" stop-color="#3c5068" /></linearGradient></defs><circle cx="32" cy="19" r="17" fill="#fdf3dc" stroke="#bcdcec" stroke-width="2" /><circle cx="32" cy="19" r="15" fill="none" stroke="#f0a850" stroke-width="1.5" /><circle cx="32" cy="18" r="10" fill="none" stroke="#f5b93c" stroke-width="4" stroke-dasharray="2 2" /><circle cx="32" cy="18" r="8" fill="#fbb424" /><path d="M0 34q6-3 12-4l8 2 12-6 8-4 8 6 6 2 11 0q-2 8-14 9l-14-1-16 1q-14 0-21-5z" fill="url(#hlA)" /></svg>
      </label>
      <div class="apps">
        <button v-for="a in apps" :key="a.name" class="bare appicon" :class="{ running: a.running, current: a.current }" :aria-label="a.name">
          <svg width="36" height="36" viewBox="0 -1 36 36" v-html="a.art"></svg>
          <b v-if="a.badge">{{ a.badge }}</b>
        </button>
      </div>
      <div class="tray">
        <button class="bare" aria-label="Hidden icons"><svg width="16" height="10" viewBox="0 0 16 10" fill="none" stroke="#222" stroke-width="1.8"><path d="M1 9l7-7 7 7" /></svg></button>
        <svg class="sync" width="26" height="26" viewBox="0 0 26 26" fill="none" stroke="#222" stroke-width="1.6"><path d="M2 10Q5 2 13 2q7 0 10 7M24 3v7h-6M11 24q-7-1-9-7M2 24v-7h7" /><circle cx="19" cy="19" r="6" fill="#f79a10" stroke="none" /></svg>
        <span class="lang">ENG<br />IN</span>
        <div class="quick">
          <svg width="24" height="18" viewBox="0 0 24 18" fill="none" stroke="#222" stroke-width="1.8"><path d="M1 6q11-10 22 0M4 10q8-7 16 0M8 13q4-3 8 0" /><circle cx="12" cy="16" r="1.4" fill="#222" /></svg>
          <svg width="24" height="18" viewBox="0 0 24 18" fill="none" stroke="#222" stroke-width="1.6"><path d="M1 6h4l5-5v16l-5-5H1zM13 6q2 3 0 6M16 4q4 5 0 10" /><path d="M19 2q5 7 0 14" stroke="#aaa" /></svg>
          <svg width="26" height="20" viewBox="0 0 26 20" fill="none" stroke="#222" stroke-width="1.8"><path d="M8 5h11q3 0 3 3v8q0 2-3 2H5q-3 0-3-2v-5M24 9v5" /><path d="M10 7h9q1 0 1 2v5q0 2-1 2H6q-2 0-2-2v-2l6-2z" fill="#222" stroke="none" /><path d="M5 0L1 7h3l-1 5 6-7H5l2-5z" fill="#222" stroke="none" /></svg>
        </div>
        <span class="clock">11:18<br />21-06-2025</span>
      </div>
    </footer>
  </div>
</template>

<style>
body {
  margin: 0;
  background: #f5f5f5;
}
</style>

<style scoped>
.app {
  display: flex;
  flex-direction: column;
  height: 100vh;
  min-width: 1500px;
  overflow: hidden;
  background: #f5f5f5;
  color: #242424;
  font: 17px/24px "Open Sans", "Noto Sans", sans-serif;
}
.app *,
.app *::before,
.app *::after {
  box-sizing: border-box;
}
button,
input {
  font: inherit;
  color: inherit;
}
svg {
  display: block;
  flex: none;
  overflow: visible;
}
h1, h2, h3, h4, p {
  margin: 0;
  font: inherit;
}
.bare {
  display: flex;
  align-items: center;
  justify-content: center;
  border: 0;
  padding: 0;
  background: none;
  white-space: nowrap;
}

.titlebar {
  display: flex;
  align-items: center;
  flex: none;
  height: 52px;
  padding: 0 22px 0 24px;
  gap: 22px;
}
.filename {
  gap: 8px;
  margin-top: 5px;
  margin-right: auto;
  margin-left: -8px;
  color: #333;
}
.filename svg {
  margin-bottom: 6px;
}
.signin {
  margin-right: -4px;
}
.avatar {
  display: grid;
  place-items: center;
  width: 30px;
  height: 30px;
  border-radius: 50%;
  background: #e6e6e6;
}
.win {
  width: 22px;
  margin-left: 22px;
}

.menubar {
  display: flex;
  align-items: flex-start;
  flex: none;
  height: 53px;
  padding: 5px 10px 0 34px;
  gap: 35px;
  font-size: 20px;
}
.menu {
  position: relative;
  height: 39px;
  padding-bottom: 2px;
  color: #424242;
}
.menu:first-child {
  margin-right: 14px;
}
.menu.active {
  font-weight: 600;
  color: #242424;
}
.menu.active::after {
  content: "";
  position: absolute;
  right: 0;
  bottom: 0;
  left: 0;
  height: 3px;
  border-radius: 2px;
  background: #117865;
}
.share {
  display: flex;
  align-items: center;
  height: 36px;
  margin-left: auto;
  padding: 0 12px 0 10px;
  gap: 6px;
  border: 0;
  border-radius: 5px;
  background: #117865;
  color: #fff;
  font-size: 17px;
}
.share span {
  margin-left: 6px;
}

.ribbon {
  position: relative;
  z-index: 1;
  display: flex;
  flex: none;
  height: 150px;
  margin: 0 12px;
  padding: 6px 0;
  border-radius: 12px;
  background: #fff;
  box-shadow: 0 2px 4px rgba(0, 0, 0, 0.16);
}
.group {
  display: flex;
  flex-direction: column;
  padding: 7px 12px 0;
  border-right: 1px solid #c8c8c8;
}
.clipboard {
  width: 240px;
  padding-left: 11px;
}
.tools {
  display: flex;
  height: 106px;
}
.tool {
  display: flex;
  flex-direction: column;
  align-items: center;
  border: 0;
  padding: 0;
  background: none;
  white-space: nowrap;
}
.glyph {
  margin-bottom: 3px;
}
.s60 { width: 60px; }
.s62 { width: 62px; }
.s72 { width: 72px; }
.s74 { width: 74px; }
.s82 { width: 82px; }
.s84 { width: 84px; }
.s86 { width: 86px; }
.s108 { width: 108px; }
.off {
  color: #c4c4c4;
}
.line {
  display: flex;
  align-items: center;
  height: 24px;
}
.caret {
  margin: 3px 0 0 3px;
}
.caption {
  font-size: 14px;
  line-height: 20px;
  text-align: center;
  margin-top: 2px;
}
.stack {
  display: flex;
  flex-direction: column;
  margin-left: 4px;
}
.mini {
  justify-content: flex-start;
  height: 39px;
  gap: 6px;
  color: #c4c4c4;
}
.mini:first-child {
  height: 31px;
  margin: -4px 0 4px;
}
.collapse {
  align-self: flex-end;
  margin: 0 12px 9px auto;
}

.work {
  display: flex;
  flex: 1;
  min-height: 0;
}
.rail {
  display: flex;
  flex: none;
  flex-direction: column;
  width: 61px;
  border-right: 1px solid #e6e6e6;
}
.view {
  height: 60px;
  border-left: 4px solid transparent;
  padding: 0 2px 2px 0;
}
.view.current {
  border-color: #117865;
}

.center {
  display: flex;
  flex: 1;
  flex-direction: column;
  min-width: 0;
  background: #fff;
}
.upper {
  display: flex;
  flex: 1;
  min-height: 0;
}
.canvas {
  display: flex;
  flex: 1;
  min-width: 0;
  padding: 3px 51px 9px;
}
.textbox {
  position: relative;
  display: flex;
  flex: 1;
  flex-direction: column;
  min-width: 0;
  padding: 0 3px 3px;
  background:
    repeating-linear-gradient(180deg, #666 0 3px, transparent 3px 6px) left / 3px 100% no-repeat,
    repeating-linear-gradient(180deg, #666 0 3px, transparent 3px 6px) right / 3px 100% no-repeat,
    repeating-linear-gradient(90deg, #666 0 3px, transparent 3px 6px) bottom / 100% 3px no-repeat;
}
.doc {
  flex: 1;
  min-height: 0;
  overflow: hidden;
  padding: 2px 0 0 4px;
  border-left: 1px solid #e8e8e8;
  font-size: 14px;
  line-height: 19px;
  white-space: nowrap;
}
.doc h1 {
  margin-right: 12px;
  font-size: 29px;
  font-weight: 700;
  line-height: 40px;
  text-align: center;
}
.doc h2 {
  margin: 18px 0 17px 4px;
  font-size: 16px;
  font-weight: 700;
  line-height: 20px;
}
.doc h2.first {
  margin: 33px 0 18px 2px;
}
.para {
  font-size: 13px;
}
.doc h3 {
  display: flex;
  align-items: center;
  gap: 10px;
  margin: 17px 0 0 5px;
  font-weight: 700;
}
.item {
  display: flex;
  align-items: center;
  margin: 17px 0 0 9px;
  white-space: pre;
}
.item.tight {
  margin-top: 1px;
}
.item::before {
  content: "";
  width: 3px;
  height: 3px;
  margin-right: 4px;
  border-radius: 50%;
  background: #242424;
}
.item u {
  text-decoration: underline wavy #e02020 1px;
}
.sub {
  margin-left: 71px;
}
.sub.deep {
  margin-left: 75px;
}
.scroll {
  position: absolute;
  top: 2px;
  right: 8px;
  width: 8px;
  height: 376px;
  background: #c4c4c4;
}
.boxfoot {
  display: flex;
  align-items: center;
  justify-content: flex-end;
  flex: none;
  height: 38px;
  padding-right: 11px;
  border-top: 1px solid #e6e6e6;
}

.filters {
  display: flex;
  flex: none;
  flex-direction: column;
  align-items: center;
  width: 49px;
  padding-top: 23px;
  border-left: 1px solid #a0a0a0;
}
.bars {
  margin: 29px 0 15px 6px;
}
.filters h2 {
  font-size: 21px;
  font-weight: 600;
  writing-mode: vertical-rl;
}

.pagebar {
  display: flex;
  flex: none;
  height: 53px;
  padding-left: 15px;
}
.layout {
  position: relative;
  width: 36px;
  height: 42px;
  margin-right: 30px;
}
.layout.on::after {
  content: "";
  position: absolute;
  right: 0;
  bottom: -5px;
  left: 0;
  height: 5px;
  border-radius: 2px;
  background: #117865;
}
.step {
  width: 32px;
  height: 52px;
}
.layout + .step {
  margin-left: -20px;
}
.pages {
  display: flex;
  border-left: 1px solid #a0a0a0;
}
.page {
  padding: 0 31px;
  border: 0;
  border-right: 1px solid #d0d0d0;
  background: none;
  white-space: nowrap;
}
.page.active {
  border-bottom: 6px solid #117865;
  padding-top: 6px;
  font-weight: 600;
}
.add {
  display: grid;
  place-items: center;
  width: 60px;
  border: 0;
  background: #117865;
}

.viz,
.data {
  display: flex;
  flex: none;
  flex-direction: column;
  width: 271px;
  border-left: 1px solid #d1d1d1;
}
.panehead {
  display: flex;
  align-items: center;
  justify-content: space-between;
  height: 58px;
  padding: 0 16px 0 12px;
}
.panehead h2 {
  font-size: 22px;
  font-weight: 600;
}
.build {
  padding-left: 12px;
  font-size: 16px;
  font-weight: 600;
  line-height: 20px;
}
.modes {
  display: flex;
  gap: 50px;
  margin-top: 8px;
  padding-left: 12px;
}
.mode {
  width: 48px;
  height: 48px;
}
.mode.on {
  background: #fff;
}
.notch {
  margin-top: 7px;
}
.gallery {
  display: grid;
  grid-template-columns: repeat(6, 28px);
  grid-auto-rows: 28px;
  gap: 14px;
  padding: 16px 0 0 16px;
  flex: none;
  height: 351px;
}
.wells {
  display: flex;
  flex: 1;
  min-height: 0;
  margin-bottom: 12px;
  border-top: 1px solid #e0e0e0;
}
.fields {
  flex: 1;
  min-height: 0;
  overflow: hidden;
  padding: 12px 0 0 6px;
}
.fields h4,
.fields h3,
.row {
  padding-left: 12px;
}
.drop {
  height: 42px;
  margin: 9px 0 16px;
  padding-left: 15px;
  border: 1px dashed #d0d0d0;
  border-radius: 3px;
  line-height: 38px;
}
.fields h3 {
  font-weight: 600;
}
.row {
  display: flex;
  align-items: center;
  justify-content: space-between;
  height: 40px;
  padding-right: 24px;
}
.fields h3 + .row {
  margin-top: 5px;
}
.toggle {
  display: flex;
  align-items: center;
  justify-content: center;
  width: 48px;
  height: 24px;
  gap: 4px;
  border: 1px solid #616161;
  border-radius: 12px;
  color: #616161;
  font-size: 13px;
}
.toggle input {
  appearance: none;
  width: 12px;
  height: 12px;
  margin: 0;
  border-radius: 50%;
  background: #616161;
}
.toggle.checked {
  flex-direction: row-reverse;
  border-color: #117865;
  background: #117865;
  color: #fff;
}
.toggle.checked input {
  background: #fff;
}
.bar {
  width: 9px;
  height: 147px;
  margin-top: 3px;
  border-radius: 5px;
  background: #616161;
}

.find {
  display: flex;
  align-items: center;
  height: 36px;
  margin: 10px 6px 0;
  padding: 0 10px 0 18px;
  gap: 9px;
  border: 1px solid #d1d1d1;
  border-bottom-color: #616161;
  border-radius: 5px;
  background: #fff;
  font-size: 20px;
}
.find input,
.websearch input {
  flex: 1;
  min-width: 0;
  border: 0;
  padding: 0;
  outline: 0;
  background: none;
}
.find input::placeholder,
.websearch input::placeholder {
  color: #616161;
  opacity: 1;
}
.table {
  justify-content: flex-start;
  margin-top: 20px;
  padding-left: 26px;
  gap: 9px;
}

.status {
  display: flex;
  align-items: center;
  flex: none;
  height: 36px;
  padding: 0 28px 0 6px;
  border-top: 1px solid #d0d0d0;
  border-bottom: 1px solid #000;
  color: #333;
}
.sign {
  width: 28px;
  font-size: 20px;
  font-weight: 600;
}
.minus {
  width: 20px;
  margin-left: auto;
}
.zoom {
  appearance: none;
  width: 150px;
  height: 18px;
  margin: 0;
  background:
    linear-gradient(#424242, #424242) center / 100% 1px no-repeat,
    linear-gradient(#424242, #424242) center / 2px 7px no-repeat;
}
.zoom::-webkit-slider-thumb {
  appearance: none;
  width: 6px;
  height: 17px;
  background: #424242;
}
.percent {
  margin: 0 30px 0 12px;
}

.taskbar {
  display: flex;
  align-items: center;
  flex: none;
  height: 72px;
  padding-bottom: 2px;
  border-top: 2px solid #c4c8ba;
  background: linear-gradient(90deg, #e8f0de, #e9f3e0 35%, #f1f3dd 52%, #e9f3e4 66%, #f1f3e2);
}
.weather {
  position: relative;
  width: 38px;
  height: 50px;
  margin-left: 32px;
  align-items: flex-end;
}
.weather b,
.appicon b {
  position: absolute;
  display: grid;
  place-items: center;
  width: 24px;
  height: 24px;
  border-radius: 50%;
  background: #c42b1c;
  color: #fff;
  font-size: 16px;
  font-weight: 400;
}
.weather b {
  top: 0;
  right: 0;
}
.start {
  margin-left: 231px;
}
.websearch {
  display: flex;
  align-items: center;
  width: 328px;
  height: 47px;
  margin-left: 20px;
  padding: 0 4px 0 16px;
  border: 2px solid #dde2d0;
  border-radius: 24px;
  background: #fafcf5;
  gap: 16px;
  font-size: 19px;
}
.apps {
  display: flex;
  margin-left: 4px;
}
.appicon {
  position: relative;
  width: 56px;
  height: 56px;
  margin: 0 5px;
  border-radius: 6px;
}
.appicon b {
  top: 3px;
  right: 2px;
  background: #0f7ad4;
}
.appicon.running::after,
.appicon.current::after {
  content: "";
  position: absolute;
  bottom: 0;
  left: 24px;
  width: 8px;
  height: 4px;
  border-radius: 2px;
  background: #868a80;
}
.appicon.current {
  background: #fafbf3;
  box-shadow: 0 0 2px #ccc;
}
.appicon.current::after {
  left: 16px;
  width: 24px;
  background: #0f78d4;
}
.tray {
  display: flex;
  align-items: center;
  margin-left: auto;
  padding-right: 28px;
}
.sync {
  margin: 0 24px 0 26px;
}
.lang {
  width: 38px;
  text-align: center;
}
.quick {
  display: flex;
  gap: 12px;
  margin: 0 22px 0 26px;
}
.clock {
  font-size: 18px;
  text-align: right;
}
</style>
